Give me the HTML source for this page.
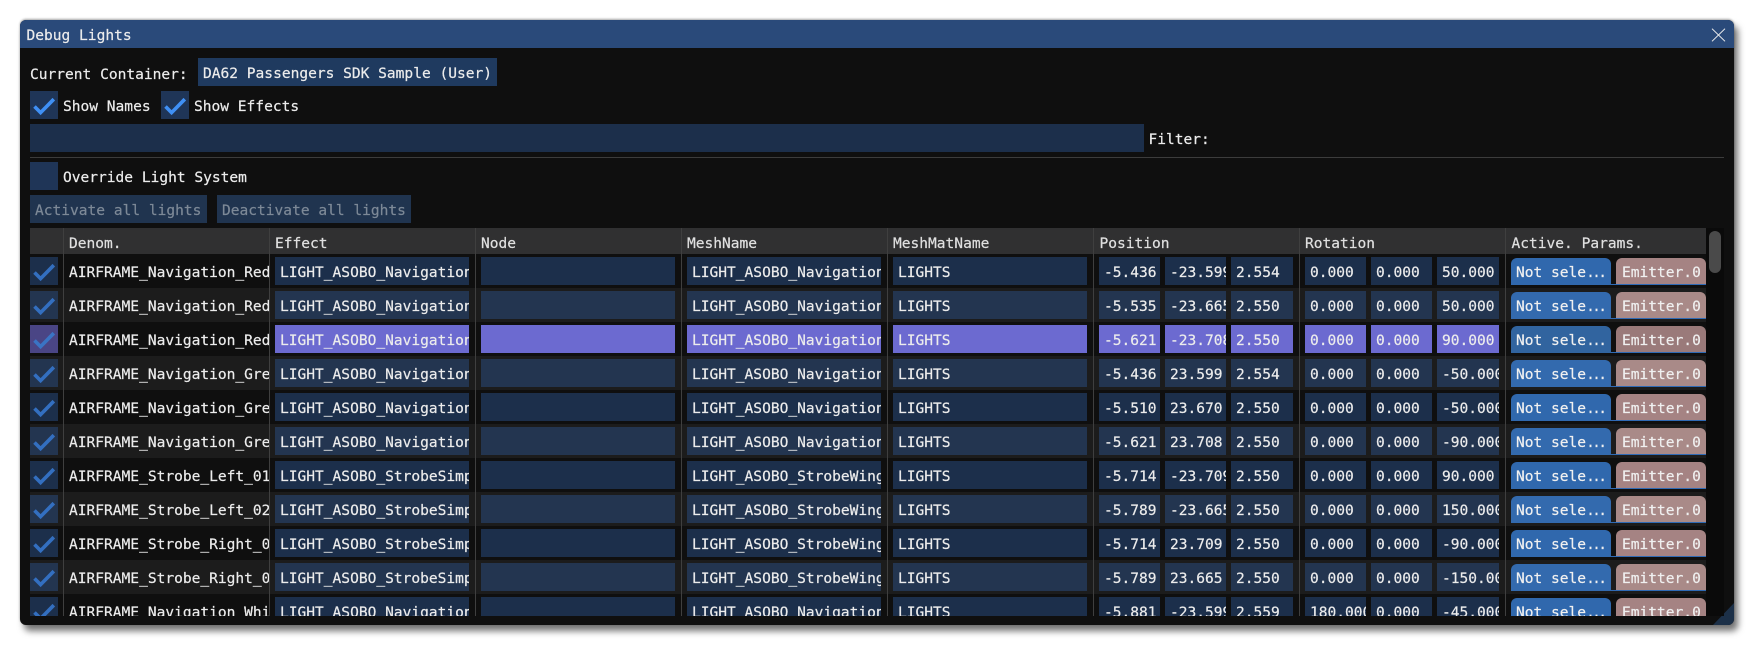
<!DOCTYPE html>
<html><head><meta charset="utf-8"><title>Debug Lights</title>
<style>
html,body{margin:0;padding:0;background:#fff;width:1754px;height:646px;overflow:hidden}
body{position:relative;font:14.55px/32px "DejaVu Sans Mono","Liberation Mono",monospace;color:#ececec;-webkit-text-stroke:.2px currentColor}
.a{position:absolute;white-space:nowrap}
#w{position:absolute;left:20px;top:20px;width:1714px;height:605px;background:#0f0f0f;border-radius:6px;box-shadow:4px 6px 7px rgba(0,0,0,.55),0 -1px 2px rgba(0,0,0,.35);overflow:hidden}
#tb{position:absolute;left:0;top:0;width:1714px;height:28px;background:#2a4a7a}
#g{position:absolute;left:1693px;top:583px;width:21px;height:22px;background:#1c3048;clip-path:polygon(100% 0,100% 100%,0 100%)}
.b{background:#1f3759;height:28px;padding:0;box-sizing:border-box}
svg.k{position:absolute;left:0;top:3px;width:28px;height:28px}
#t{position:absolute;left:0;top:254px;width:1754px;height:362px;overflow:hidden}
.r{position:relative;height:34px;width:1676px;left:30px;background:#0f0f0f}
.r.e{background:#1c1c1c}
.r b{position:absolute;left:39px;top:3px;width:200px;height:28px;overflow:hidden;white-space:nowrap;font-weight:normal;color:#ececec}
.r .cb{position:absolute;left:0;top:3px;width:28px;height:28px;background:#1c2f4b}
.r.e .cb{background:#233550}
.r.s .cb{background:#4a4585}
.r svg.k{top:3px}
.r i{position:absolute;top:3px;height:28px;overflow:hidden;white-space:nowrap;font-style:normal;background:#1c2f4b;padding-left:5px;box-sizing:border-box;width:194px;color:#ececec}
.r.e i{background:#233550}
.r.s i{background:#6c6ad0}
.r i:nth-of-type(1){left:245px}
.r i:nth-of-type(2){left:451px}
.r i:nth-of-type(3){left:657px}
.r i:nth-of-type(4){left:863px}
.r i:nth-of-type(5){left:1069px;width:61px}
.r i:nth-of-type(6){left:1135px;width:61px}
.r i:nth-of-type(7){left:1201px;width:62px}
.r i:nth-of-type(8){left:1275px;width:61px}
.r i:nth-of-type(9){left:1341px;width:61px}
.r i:nth-of-type(10){left:1407px;width:62px}
.r em,.r strong{position:absolute;top:4px;height:27px;line-height:30px;font-style:normal;font-weight:normal;white-space:nowrap;overflow:hidden;border-radius:6px 6px 0 0;box-sizing:border-box;padding-left:5px;color:#f0f0f0}
.r em{left:1481px;width:100px;background:#3068ad}
.r strong{left:1586px;width:90px;background:#a58383;padding-left:6px}
.r.e em{background:#336aae}
.r.e strong{background:#a98a88}
.r.s em{background:#31649f}
.r.s strong{background:#9a7a7a}
.r u{position:absolute;left:1581px;top:30px;width:95px;height:1px;background:#2f6ab5;text-decoration:none}
.r em span{letter-spacing:-2.7px}
.sp{position:absolute;top:228px;width:1px;height:388px;background:#3f3f3f}
#h{position:absolute;left:30px;top:228px;width:1676px;height:26px;background:#303031}
.hd{position:absolute;top:228px;line-height:31px;white-space:nowrap;color:#e0e0e0}
svg{-webkit-text-stroke:0}
</style></head><body>
<svg width="0" height="0" style="position:absolute"><defs><symbol id="c" viewBox="0 0 28 28"><path d="M4.5 15.5L10.6 21.6L23.8 8.2" fill="none" stroke="currentColor" stroke-width="3.6"/></symbol></defs></svg>
<div id="w"><div id="tb"></div><div id="g"></div></div>

<div class="a" style="left:26.5px;top:20px">Debug Lights</div>
<svg class="a" style="left:1711px;top:28px" width="15" height="14" viewBox="0 0 15 14"><path d="M1 .7L14 13.3M14 .7L1 13.3" stroke="#f0f0f0" stroke-width="1" fill="none"/></svg>

<div class="a" style="left:30px;top:59px">Current Container:</div>
<div class="a b" style="left:198px;top:58px;width:299px;background:#1f3a5f;padding-left:5px">DA62 Passengers SDK Sample (User)</div>

<div class="a b" style="left:30px;top:91px;width:28px;background:#1f3557"><svg style="display:block;color:#3f90f5" width="28" height="28"><use href="#c"/></svg></div>
<div class="a" style="left:63px;top:91px">Show Names</div>
<div class="a b" style="left:161px;top:91px;width:28px;background:#1f3557"><svg style="display:block;color:#3f90f5" width="28" height="28"><use href="#c"/></svg></div>
<div class="a" style="left:194px;top:91px">Show Effects</div>

<div class="a b" style="left:30px;top:124px;width:1114px;background:#1c2f4b"></div>
<div class="a" style="left:1148.5px;top:124px">Filter:</div>
<div class="a" style="left:30px;top:157px;width:1694px;height:1px;background:#3c3c3c"></div>

<div class="a b" style="left:30px;top:162px;width:28px;background:#1f3557"></div>
<div class="a" style="left:63px;top:162px">Override Light System</div>

<div class="a b" style="left:30px;top:195px;width:177px;background:#20344f;padding-left:5px;color:#7d8997">Activate all lights</div>
<div class="a b" style="left:217px;top:195px;width:194px;background:#20344f;padding-left:5px;color:#7d8997">Deactivate all lights</div>

<div id="h"></div>
<div class="a" style="left:1706px;top:228px;width:18px;height:388px;background:#0a0a0a"></div>
<div class="a" style="left:1709px;top:231px;width:12px;height:42px;background:#4a4a4a;border-radius:6px"></div>

<div class="hd" style="left:69px">Denom.</div>
<div class="hd" style="left:275px">Effect</div>
<div class="hd" style="left:481px">Node</div>
<div class="hd" style="left:687px">MeshName</div>
<div class="hd" style="left:893px">MeshMatName</div>
<div class="hd" style="left:1099.5px">Position</div>
<div class="hd" style="left:1305px">Rotation</div>
<div class="hd" style="left:1511.5px">Active. Params.</div>

<div id="t">
<div class="r"><div class="cb"></div><svg class="k" style="color:#336fc0"><use href="#c"/></svg><b>AIRFRAME_Navigation_Red_01</b><i>LIGHT_ASOBO_Navigation_Red</i><i></i><i>LIGHT_ASOBO_Navigation_Red</i><i>LIGHTS</i><i>-5.436</i><i>-23.599</i><i>2.554</i><i>0.000</i><i>0.000</i><i>50.000</i><em>Not sele<span>...</span></em><strong>Emitter.0</strong><u></u></div>
<div class="r e"><div class="cb"></div><svg class="k" style="color:#336fc0"><use href="#c"/></svg><b>AIRFRAME_Navigation_Red_02</b><i>LIGHT_ASOBO_Navigation_Red</i><i></i><i>LIGHT_ASOBO_Navigation_Red</i><i>LIGHTS</i><i>-5.535</i><i>-23.665</i><i>2.550</i><i>0.000</i><i>0.000</i><i>50.000</i><em>Not sele<span>...</span></em><strong>Emitter.0</strong><u></u></div>
<div class="r s"><div class="cb"></div><svg class="k" style="color:#3a74c4"><use href="#c"/></svg><b>AIRFRAME_Navigation_Red_03</b><i>LIGHT_ASOBO_Navigation_Red</i><i></i><i>LIGHT_ASOBO_Navigation_Red</i><i>LIGHTS</i><i>-5.621</i><i>-23.708</i><i>2.550</i><i>0.000</i><i>0.000</i><i>90.000</i><em>Not sele<span>...</span></em><strong>Emitter.0</strong><u></u></div>
<div class="r e"><div class="cb"></div><svg class="k" style="color:#336fc0"><use href="#c"/></svg><b>AIRFRAME_Navigation_Green_01</b><i>LIGHT_ASOBO_Navigation_Green</i><i></i><i>LIGHT_ASOBO_Navigation_Green</i><i>LIGHTS</i><i>-5.436</i><i>23.599</i><i>2.554</i><i>0.000</i><i>0.000</i><i>-50.000</i><em>Not sele<span>...</span></em><strong>Emitter.0</strong><u></u></div>
<div class="r"><div class="cb"></div><svg class="k" style="color:#336fc0"><use href="#c"/></svg><b>AIRFRAME_Navigation_Green_02</b><i>LIGHT_ASOBO_Navigation_Green</i><i></i><i>LIGHT_ASOBO_Navigation_Green</i><i>LIGHTS</i><i>-5.510</i><i>23.670</i><i>2.550</i><i>0.000</i><i>0.000</i><i>-50.000</i><em>Not sele<span>...</span></em><strong>Emitter.0</strong><u></u></div>
<div class="r e"><div class="cb"></div><svg class="k" style="color:#336fc0"><use href="#c"/></svg><b>AIRFRAME_Navigation_Green_03</b><i>LIGHT_ASOBO_Navigation_Green</i><i></i><i>LIGHT_ASOBO_Navigation_Green</i><i>LIGHTS</i><i>-5.621</i><i>23.708</i><i>2.550</i><i>0.000</i><i>0.000</i><i>-90.000</i><em>Not sele<span>...</span></em><strong>Emitter.0</strong><u></u></div>
<div class="r"><div class="cb"></div><svg class="k" style="color:#336fc0"><use href="#c"/></svg><b>AIRFRAME_Strobe_Left_01</b><i>LIGHT_ASOBO_StrobeSimple</i><i></i><i>LIGHT_ASOBO_StrobeWing_Left</i><i>LIGHTS</i><i>-5.714</i><i>-23.709</i><i>2.550</i><i>0.000</i><i>0.000</i><i>90.000</i><em>Not sele<span>...</span></em><strong>Emitter.0</strong><u></u></div>
<div class="r e"><div class="cb"></div><svg class="k" style="color:#336fc0"><use href="#c"/></svg><b>AIRFRAME_Strobe_Left_02</b><i>LIGHT_ASOBO_StrobeSimple</i><i></i><i>LIGHT_ASOBO_StrobeWing_Left</i><i>LIGHTS</i><i>-5.789</i><i>-23.665</i><i>2.550</i><i>0.000</i><i>0.000</i><i>150.000</i><em>Not sele<span>...</span></em><strong>Emitter.0</strong><u></u></div>
<div class="r"><div class="cb"></div><svg class="k" style="color:#336fc0"><use href="#c"/></svg><b>AIRFRAME_Strobe_Right_01</b><i>LIGHT_ASOBO_StrobeSimple</i><i></i><i>LIGHT_ASOBO_StrobeWing_Right</i><i>LIGHTS</i><i>-5.714</i><i>23.709</i><i>2.550</i><i>0.000</i><i>0.000</i><i>-90.000</i><em>Not sele<span>...</span></em><strong>Emitter.0</strong><u></u></div>
<div class="r e"><div class="cb"></div><svg class="k" style="color:#336fc0"><use href="#c"/></svg><b>AIRFRAME_Strobe_Right_02</b><i>LIGHT_ASOBO_StrobeSimple</i><i></i><i>LIGHT_ASOBO_StrobeWing_Right</i><i>LIGHTS</i><i>-5.789</i><i>23.665</i><i>2.550</i><i>0.000</i><i>0.000</i><i>-150.000</i><em>Not sele<span>...</span></em><strong>Emitter.0</strong><u></u></div>
<div class="r"><div class="cb"></div><svg class="k" style="color:#336fc0"><use href="#c"/></svg><b>AIRFRAME_Navigation_White_01</b><i>LIGHT_ASOBO_Navigation_White</i><i></i><i>LIGHT_ASOBO_Navigation_White</i><i>LIGHTS</i><i>-5.881</i><i>-23.599</i><i>2.559</i><i>180.000</i><i>0.000</i><i>-45.000</i><em>Not sele<span>...</span></em><strong>Emitter.0</strong><u></u></div>
</div>

<div class="sp" style="left:63px"></div>
<div class="sp" style="left:269px"></div>
<div class="sp" style="left:475px"></div>
<div class="sp" style="left:681px"></div>
<div class="sp" style="left:887px"></div>
<div class="sp" style="left:1093px"></div>
<div class="sp" style="left:1299px"></div>
<div class="sp" style="left:1505px"></div>
</body></html>
